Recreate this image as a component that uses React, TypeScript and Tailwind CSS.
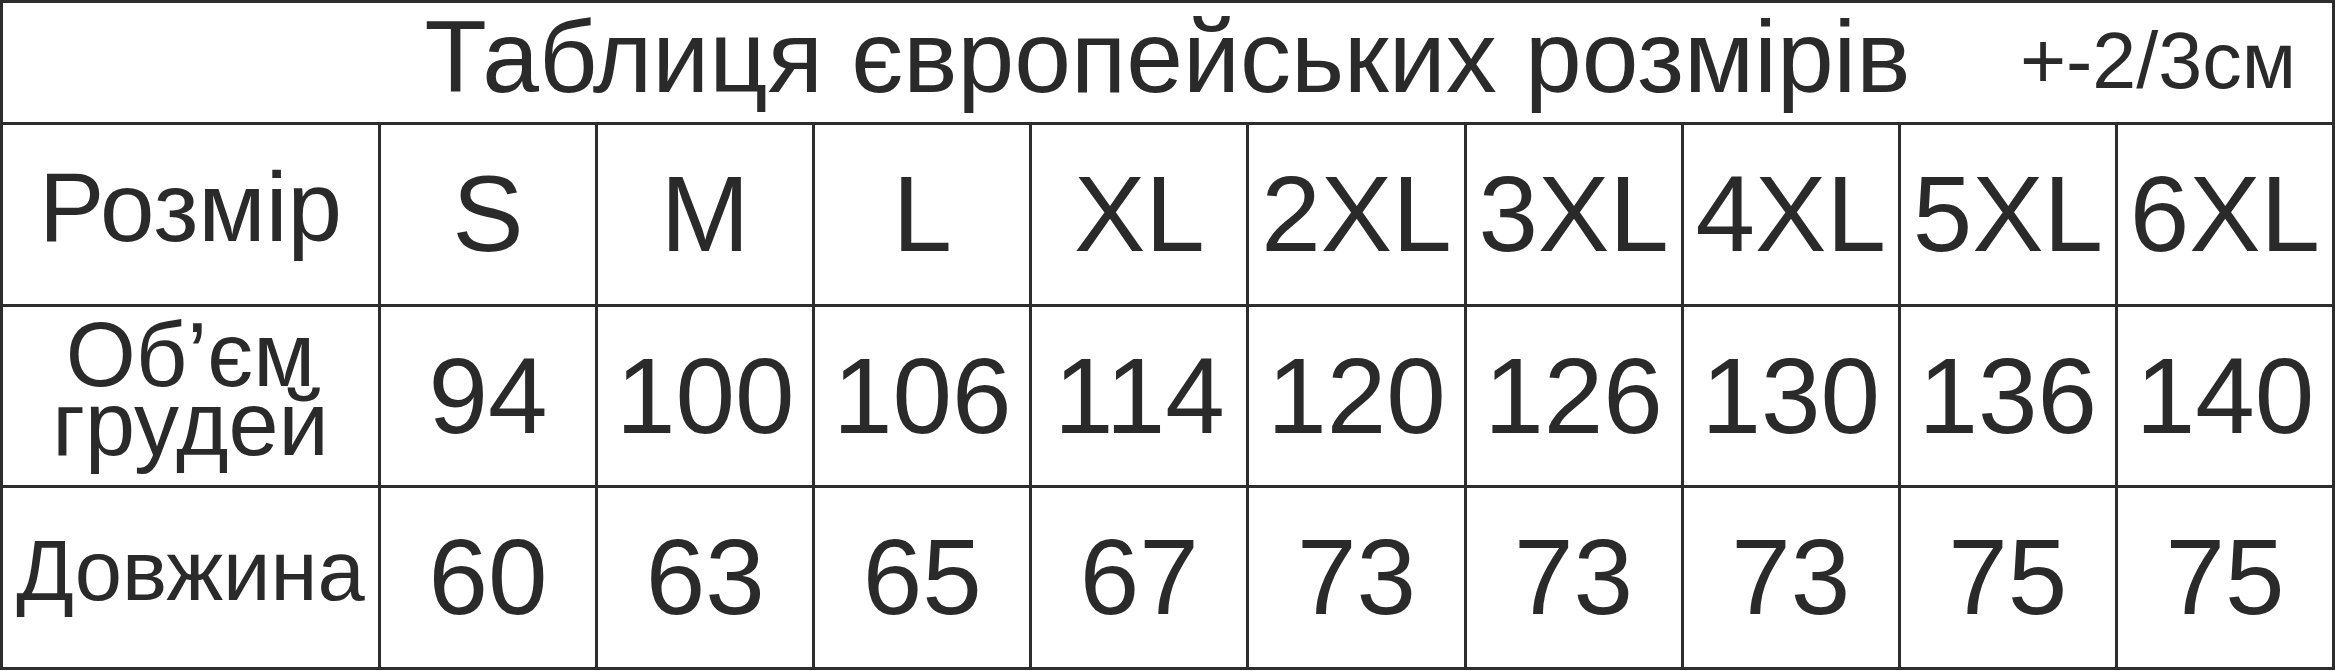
const sizes = ["S", "M", "L", "XL", "2XL", "3XL", "4XL", "5XL", "6XL"];
const chest = ["94", "100", "106", "114", "120", "126", "130", "136", "140"];
const length = ["60", "63", "65", "67", "73", "73", "73", "75", "75"];

const cell = "flex items-center justify-center border-r-[3px] border-b-[3px] border-[#2d2d2d] leading-none";

export default function App() {
  return (
    <div className="w-[2335px] h-[671px] bg-white text-[#2a2a2a] font-['Liberation_Sans',Arial,sans-serif] overflow-hidden">
      <div className="grid grid-cols-[378px_repeat(9,minmax(0,1fr))] grid-rows-[122px_182px_181px_182px] border-l-[3px] border-t-[3px] border-[#2d2d2d]">
        {/* title row */}
        <div className="col-span-10 grid grid-cols-[1fr_auto_1fr] items-start border-r-[3px] border-b-[3px] border-[#2d2d2d]">
          <div />
          <div className="text-[102px] leading-[108px]">Таблиця європейських розмірів</div>
          <div className="flex justify-end pr-[36px] pt-[14px]">
            <span className="text-[79px] leading-[88px]">+-2/3см</span>
          </div>
        </div>

        {/* sizes */}
        <div className={`${cell} pb-[16px] text-[98px]`}>Розмір</div>
        {sizes.map((s, i) => (
          <div key={`s${i}`} className={`${cell} text-[107px]`}>
            {s}
          </div>
        ))}

        {/* chest */}
        <div className={`${cell} pb-[12px]`}>
          <div className="text-center text-[90px] leading-[69px]">
            Об’єм
            <br />
            грудей
          </div>
        </div>
        {chest.map((v, i) => (
          <div key={`c${i}`} className={`${cell} text-[107px]`}>
            {v}
          </div>
        ))}

        {/* length */}
        <div className={`${cell} pb-[14px] text-[85px]`}>Довжина</div>
        {length.map((v, i) => (
          <div key={`l${i}`} className={`${cell} text-[107px]`}>
            {v}
          </div>
        ))}
      </div>
    </div>
  );
}
